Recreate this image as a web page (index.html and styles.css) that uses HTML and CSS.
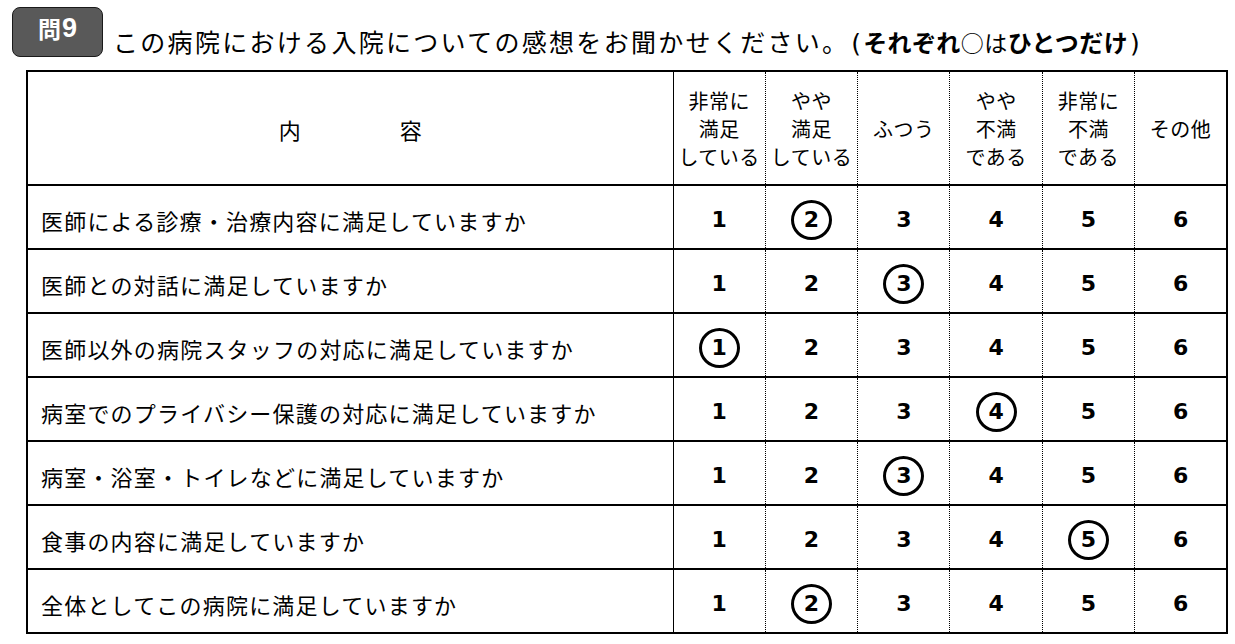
FILE: index.html
```html
<!DOCTYPE html>
<html lang="ja">
<head>
<meta charset="utf-8">
<link rel="stylesheet" href="styles.css">
</head>
<body>
<div class="page">
  <div class="head">
    <div class="badge"><span class="q">問</span><span class="qn">9</span></div>
    <div class="title">この病院における入院についての感想をお聞かせください。<span class="paren">(</span><span class="bold">それぞれ</span><span class="thin">○は</span><span class="bold">ひとつだけ</span><span class="paren">)</span></div>
  </div>
  <table class="survey">
    <colgroup>
      <col class="col-text">
      <col class="col-opt"><col class="col-opt"><col class="col-opt"><col class="col-opt"><col class="col-opt"><col class="col-opt">
    </colgroup>
    <thead>
      <tr>
        <th class="c-text"><span class="naiyo"><span>内</span><span>容</span></span></th>
        <th>非常に<br>満足<br>している</th>
        <th>やや<br>満足<br>している</th>
        <th>ふつう</th>
        <th>やや<br>不満<br>である</th>
        <th>非常に<br>不満<br>である</th>
        <th>その他</th>
      </tr>
    </thead>
    <tbody>
      <tr><td class="c-text">医師による診療・治療内容に満足していますか</td><td><span class="n">1</span></td><td><span class="n sel">2</span></td><td><span class="n">3</span></td><td><span class="n">4</span></td><td><span class="n">5</span></td><td><span class="n">6</span></td></tr>
      <tr><td class="c-text">医師との対話に満足していますか</td><td><span class="n">1</span></td><td><span class="n">2</span></td><td><span class="n sel">3</span></td><td><span class="n">4</span></td><td><span class="n">5</span></td><td><span class="n">6</span></td></tr>
      <tr><td class="c-text">医師以外の病院スタッフの対応に満足していますか</td><td><span class="n sel">1</span></td><td><span class="n">2</span></td><td><span class="n">3</span></td><td><span class="n">4</span></td><td><span class="n">5</span></td><td><span class="n">6</span></td></tr>
      <tr><td class="c-text">病室でのプライバシー保護の対応に満足していますか</td><td><span class="n">1</span></td><td><span class="n">2</span></td><td><span class="n">3</span></td><td><span class="n sel">4</span></td><td><span class="n">5</span></td><td><span class="n">6</span></td></tr>
      <tr><td class="c-text">病室・浴室・トイレなどに満足していますか</td><td><span class="n">1</span></td><td><span class="n">2</span></td><td><span class="n sel">3</span></td><td><span class="n">4</span></td><td><span class="n">5</span></td><td><span class="n">6</span></td></tr>
      <tr><td class="c-text">食事の内容に満足していますか</td><td><span class="n">1</span></td><td><span class="n">2</span></td><td><span class="n">3</span></td><td><span class="n">4</span></td><td><span class="n sel">5</span></td><td><span class="n">6</span></td></tr>
      <tr><td class="c-text">全体としてこの病院に満足していますか</td><td><span class="n">1</span></td><td><span class="n sel">2</span></td><td><span class="n">3</span></td><td><span class="n">4</span></td><td><span class="n">5</span></td><td><span class="n">6</span></td></tr>
    </tbody>
  </table>
</div>
</body>
</html>
```

FILE: styles.css
```css
html, body {
  margin: 0;
  padding: 0;
  background: #fff;
}
body {
  font-family: "Noto Sans CJK JP", "Noto Sans", sans-serif;
  color: #000;
}
.page {
  width: 1235px;
  height: 644px;
  overflow: hidden;
}
.head {
  display: flex;
  align-items: flex-start;
  height: 70px;
  padding: 7px 0 0 12px;
  box-sizing: border-box;
}
.badge {
  width: 91px;
  height: 50px;
  box-sizing: border-box;
  border: 1.5px solid #1a1a1a;
  border-radius: 8px;
  background: #595959;
  color: #fff;
  font-weight: 700;
  display: flex;
  justify-content: center;
  align-items: center;
  padding-bottom: 8px;
  gap: 1px;
}
.badge .q {
  font-size: 23px;
  line-height: 26px;
}
.badge .qn {
  font-family: "Liberation Sans", Arial, sans-serif;
  font-size: 27px;
  line-height: 26px;
}
.title {
  margin-left: 10px;
  padding-top: 19px;
  font-size: 25px;
  line-height: 30px;
  letter-spacing: 2.3px;
  white-space: nowrap;
}
.title .paren {
  font-family: "DejaVu Sans", sans-serif;
  font-size: 25px;
  letter-spacing: 0;
  margin: 0 2px;
}
.title .bold {
  font-weight: 700;
  font-size: 24px;
  letter-spacing: 0.4px;
}
.title .thin {
  font-size: 23px;
  letter-spacing: 0.5px;
}
.survey {
  margin-left: 26px;
  border-collapse: collapse;
  table-layout: fixed;
  width: 1200px;
}
.col-text {
  width: 646px;
}
.col-opt {
  width: 92.33px;
}
.survey th, .survey td {
  border-top: 2px solid #000;
  border-bottom: 2px solid #000;
  border-left: 1px dotted #000;
  border-right: 1px dotted #000;
  padding: 0;
  text-align: center;
  vertical-align: middle;
}
.survey th:first-child, .survey td:first-child {
  border-left: 2px solid #000;
  border-right: 1.5px solid #000;
}
.survey th:last-child, .survey td:last-child {
  border-right: 2px solid #000;
}
.survey thead tr {
  height: 114px;
}
.survey th {
  font-weight: 400;
  font-size: 20px;
  line-height: 28px;
  padding-top: 1px;
  letter-spacing: 0.5px;
}
.survey th.c-text {
  font-size: 22px;
  letter-spacing: 0;
}
.naiyo {
  display: inline-flex;
  gap: 99px;
}
.survey tbody tr {
  height: 64px;
}
.survey td.c-text {
  text-align: left;
  padding-left: 13px;
  padding-top: 6px;
  font-size: 22px;
  letter-spacing: 1.2px;
  white-space: nowrap;
}
.survey td {
  padding-top: 6px;
}
.n {
  position: relative;
  display: inline-block;
  font-family: "DejaVu Sans", "Verdana", sans-serif;
  font-weight: 700;
  font-size: 22px;
  line-height: 24px;
}
.n.sel::after {
  content: "";
  position: absolute;
  left: 50%;
  top: 50%;
  width: 41px;
  height: 40px;
  margin-left: -20.5px;
  margin-top: -20px;
  box-sizing: border-box;
  border: 3px solid #000;
  border-radius: 50%;
}
```
